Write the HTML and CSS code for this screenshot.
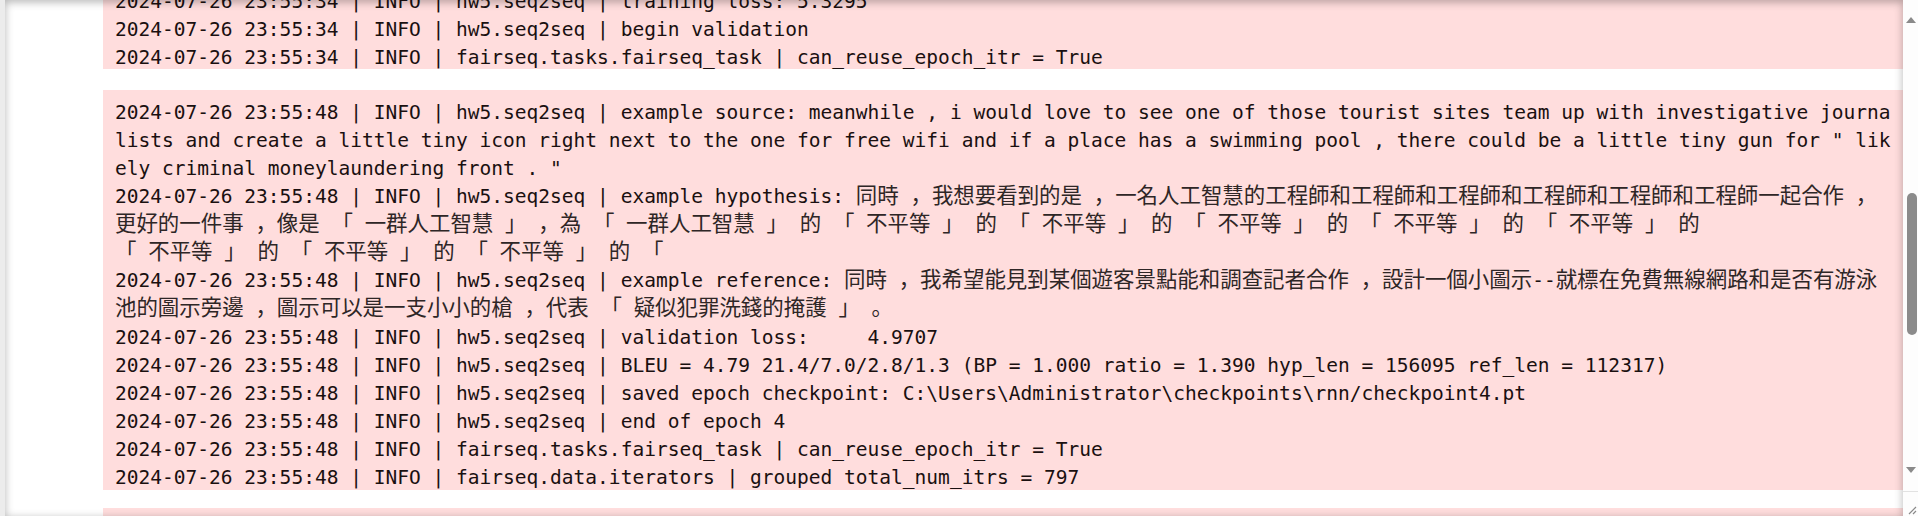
FILE: index.html
```html
<!DOCTYPE html>
<html lang="en">
<head>
<meta charset="utf-8">
<title>fairseq training log</title>
<link rel="stylesheet" href="styles.css">
</head>
<body>
<div class="frame">
  <div class="viewport">
    <div class="log">
      <pre class="chunk chunk-first"><span class="txt">2024-07-26 23:55:34 | INFO | hw5.seq2seq | training loss: 5.3295
2024-07-26 23:55:34 | INFO | hw5.seq2seq | begin validation
2024-07-26 23:55:34 | INFO | fairseq.tasks.fairseq_task | can_reuse_epoch_itr = True</span></pre>
      <pre class="chunk chunk-main"><span class="txt">2024-07-26 23:55:48 | INFO | hw5.seq2seq | example source: meanwhile , i would love to see one of those tourist sites team up with investigative journa
lists and create a little tiny icon right next to the one for free wifi and if a place has a swimming pool , there could be a little tiny gun for " lik
ely criminal moneylaundering front . "
2024-07-26 23:55:48 | INFO | hw5.seq2seq | example hypothesis: <span class="zh">同時</span> <span class="zh">，我想要看到的是</span> <span class="zh">，一名人工智慧的工程師和工程師和工程師和工程師和工程師和工程師一起合作</span> <span class="zh">，</span>
<span class="zh">更好的一件事</span> <span class="zh">，像是</span> <span class="zh">「</span> <span class="zh">一群人工智慧</span> <span class="zh">」</span> <span class="zh">，為</span> <span class="zh">「</span> <span class="zh">一群人工智慧</span> <span class="zh">」</span> <span class="zh">的</span> <span class="zh">「</span> <span class="zh">不平等</span> <span class="zh">」</span> <span class="zh">的</span> <span class="zh">「</span> <span class="zh">不平等</span> <span class="zh">」</span> <span class="zh">的</span> <span class="zh">「</span> <span class="zh">不平等</span> <span class="zh">」</span> <span class="zh">的</span> <span class="zh">「</span> <span class="zh">不平等</span> <span class="zh">」</span> <span class="zh">的</span> <span class="zh">「</span> <span class="zh">不平等</span> <span class="zh">」</span> <span class="zh">的</span>
<span class="zh">「</span> <span class="zh">不平等</span> <span class="zh">」</span> <span class="zh">的</span> <span class="zh">「</span> <span class="zh">不平等</span> <span class="zh">」</span> <span class="zh">的</span> <span class="zh">「</span> <span class="zh">不平等</span> <span class="zh">」</span> <span class="zh">的</span> <span class="zh">「</span>
2024-07-26 23:55:48 | INFO | hw5.seq2seq | example reference: <span class="zh">同時</span> <span class="zh">，我希望能見到某個遊客景點能和調查記者合作</span> <span class="zh">，設計一個小圖示</span>--<span class="zh">就標在免費無線網路和是否有游泳</span>
<span class="zh">池的圖示旁邊</span> <span class="zh">，圖示可以是一支小小的槍</span> <span class="zh">，代表</span> <span class="zh">「</span> <span class="zh">疑似犯罪洗錢的掩護</span> <span class="zh">」</span> <span class="zh">。</span>
2024-07-26 23:55:48 | INFO | hw5.seq2seq | validation loss:	4.9707
2024-07-26 23:55:48 | INFO | hw5.seq2seq | BLEU = 4.79 21.4/7.0/2.8/1.3 (BP = 1.000 ratio = 1.390 hyp_len = 156095 ref_len = 112317)
2024-07-26 23:55:48 | INFO | hw5.seq2seq | saved epoch checkpoint: C:\Users\Administrator\checkpoints\rnn/checkpoint4.pt
2024-07-26 23:55:48 | INFO | hw5.seq2seq | end of epoch 4
2024-07-26 23:55:48 | INFO | fairseq.tasks.fairseq_task | can_reuse_epoch_itr = True
2024-07-26 23:55:48 | INFO | fairseq.data.iterators | grouped total_num_itrs = 797</span></pre>
      <pre class="chunk chunk-next"> </pre>
    </div>
  </div>
  <div class="scrollbar">
    <div class="sb-arrow sb-up"></div>
    <div class="sb-track"><div class="sb-thumb"></div></div>
    <div class="sb-arrow sb-down"></div>
    <div class="sb-corner">
      <svg width="15" height="15" viewBox="0 0 15 15"><path d="M13 6 L6 13 M13 10 L10 13" stroke="#8a8a8a" stroke-width="1.2" fill="none"/></svg>
    </div>
  </div>
</div>
</body>
</html>
```
FILE: styles.css
```css
html, body {
  margin: 0;
  padding: 0;
  background: #ffffff;
}

.frame {
  display: flex;
  height: 516px;
  overflow: hidden;
  padding-left: 5px;
  background: #ececec;
}

.viewport {
  flex: 1;
  position: relative;
  overflow: hidden;
  background: #ffffff;
}

.viewport::after {
  content: "";
  position: absolute;
  inset: 0;
  box-shadow: inset 0 2px 8px rgba(0, 0, 0, 0.3);
  pointer-events: none;
}

.log {
  margin-top: -15px;
  padding-left: 98px;
}

.chunk {
  margin: 0;
  background: #ffdddd;
  color: #1a1010;
  font-family: "DejaVu Sans Mono", "Noto Sans CJK JP", monospace;
  font-size: 19.55px;
  line-height: 28.1px;
  white-space: pre;
  tab-size: 8;
  padding: 0 0 0 12px;
}

.txt {
  line-height: 20px;
  vertical-align: -2.5px;
}

.chunk-main {
  margin-top: 21px;
  padding-top: 6px;
}

.chunk-next {
  margin-top: 18px;
}

.zh {
  font-family: "Noto Sans CJK JP", sans-serif;
  font-size: 21.45px;
  line-height: 1;
  color: #2e2626;
}

.scrollbar {
  width: 15px;
  display: flex;
  flex-direction: column;
  background: #fdfdfd;
}

.sb-arrow {
  height: 40px;
  display: flex;
  justify-content: center;
  align-items: center;
}

.sb-up {
  align-items: flex-start;
  padding-top: 17px;
  height: 23px;
  box-sizing: content-box;
}

.sb-up::before,
.sb-down::before {
  content: "";
  width: 0;
  height: 0;
  border-left: 5px solid transparent;
  border-right: 5px solid transparent;
}

.sb-up::before {
  border-bottom: 6px solid #8a8a8a;
}

.sb-down::before {
  border-top: 6px solid #8a8a8a;
}

.sb-track {
  flex: 1;
  padding-top: 153px;
}

.sb-thumb {
  height: 142px;
  width: 10px;
  margin-left: 4px;
  background: #8b8b8b;
  border-radius: 5px;
}

.sb-down {
  height: 24px;
  align-items: flex-start;
}

.sb-corner {
  height: 24px;
  border-top: 1px solid #e2e2e2;
  display: flex;
  align-items: flex-end;
}

.sb-corner svg {
  display: block;
}
```
